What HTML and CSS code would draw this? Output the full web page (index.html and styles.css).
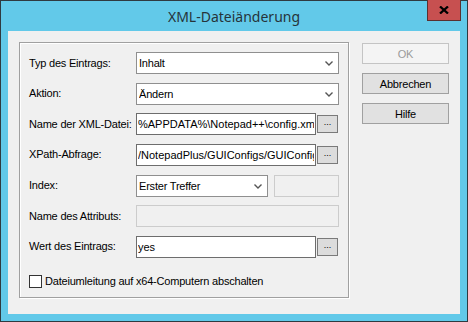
FILE: index.html
```html
<!DOCTYPE html>
<html lang="de">
<head>
    <meta charset="UTF-8">
    <title>XML-Dateiänderung</title>
    <link rel="stylesheet" href="styles.css">
</head>
<body>
    <div class="window">
        <div class="titlebar">
            <span class="title">XML-Dateiänderung</span>
            <button class="close" title="Schließen">
                <svg width="10" height="8" viewBox="0 0 10 8"><path d="M1 0.5 L9 7.5 M9 0.5 L1 7.5" stroke="#000" stroke-width="2.3"/></svg>
            </button>
        </div>

        <div class="client">
            <div class="group">
                <div class="grid">
                    <label>Typ des Eintrags:</label>
                    <div class="combo">
                        <select><option>Inhalt</option></select>
                        <svg class="chev" width="8" height="5" viewBox="0 0 8 5"><path d="M0.5 0.5 L4 4 L7.5 0.5" fill="none" stroke="#555" stroke-width="1.4"/></svg>
                    </div>

                    <label>Aktion:</label>
                    <div class="combo">
                        <select><option>Ändern</option></select>
                        <svg class="chev" width="8" height="5" viewBox="0 0 8 5"><path d="M0.5 0.5 L4 4 L7.5 0.5" fill="none" stroke="#555" stroke-width="1.4"/></svg>
                    </div>

                    <label>Name der XML-Datei:</label>
                    <div class="field">
                        <input type="text" value="%APPDATA%\Notepad++\config.xml">
                        <button class="dots">...</button>
                    </div>

                    <label>XPath-Abfrage:</label>
                    <div class="field">
                        <input type="text" value="/NotepadPlus/GUIConfigs/GUIConfig[@name='RememberLastSession']">
                        <button class="dots">...</button>
                    </div>

                    <label>Index:</label>
                    <div class="field">
                        <div class="combo small">
                            <select><option>Erster Treffer</option></select>
                            <svg class="chev" width="8" height="5" viewBox="0 0 8 5"><path d="M0.5 0.5 L4 4 L7.5 0.5" fill="none" stroke="#555" stroke-width="1.4"/></svg>
                        </div>
                        <input type="text" class="disabled" disabled>
                    </div>

                    <label>Name des Attributs:</label>
                    <div class="field">
                        <input type="text" class="disabled" disabled>
                    </div>

                    <label>Wert des Eintrags:</label>
                    <div class="field">
                        <input type="text" value="yes">
                        <button class="dots">...</button>
                    </div>
                </div>

                <label class="check"><span class="box"></span>Dateiumleitung auf x64-Computern abschalten</label>
            </div>

            <div class="buttons">
                <button class="btn" disabled>OK</button>
                <button class="btn">Abbrechen</button>
                <button class="btn">Hilfe</button>
            </div>
        </div>
    </div>
</body>
</html>
```

FILE: styles.css
```css
body { margin: 0; font-family: "Liberation Sans", Arial, sans-serif; font-size: 11px; letter-spacing: -0.2px; color: #000; }
.window { position: relative; width: 468px; height: 322px; box-sizing: border-box; border: 1px solid #2f3a40; background: #62c9e9; }
.titlebar { height: 30px; display: flex; align-items: center; justify-content: center; }
.title { font-family: "Noto Sans", sans-serif; font-size: 14px; letter-spacing: 0; color: #26343a; }
.close { position: absolute; top: -1px; right: 6px; width: 34px; height: 21px; box-sizing: border-box; border: 1px solid #5a3030; border-top: none; background: #c75050; padding: 0; display: flex; align-items: center; justify-content: center; }
.close svg { display: block; }

.client { margin: 0 7px; height: 283px; background: #f0f0f0; box-sizing: border-box; padding: 11px; display: flex; gap: 13px; }

.group { width: 330px; height: 256px; box-sizing: border-box; border: 1px solid #a0a0a0; box-shadow: inset 1px 1px 0 #fff, 1px 1px 0 #fff; padding: 9px 9px 0 9px; }
.grid { display: grid; grid-template-columns: 107px 203px; grid-auto-rows: 22px; row-gap: 8.67px; align-items: center; }
.grid label { line-height: 13px; white-space: nowrap; }

.combo { position: relative; height: 22px; }
.combo select { appearance: none; -webkit-appearance: none; width: 100%; height: 100%; box-sizing: border-box; border: 1px solid #8f8f8f; background: #fff; font: inherit; letter-spacing: inherit; color: #000; padding: 0 0 0 2px; margin: 0; border-radius: 0; }
.chev { position: absolute; right: 6px; top: 9px; }
.combo.small { width: 132px; flex: none; }

.field { display: flex; align-items: center; height: 22px; }
.field input { flex: 1; min-width: 0; height: 22px; box-sizing: border-box; border: 1px solid #6d6d6d; background: #fff; font: inherit; letter-spacing: 0; color: #000; padding: 0 1px; margin: 0; border-radius: 0; outline: none; }
.field input.disabled { border-color: #cccccc; background: #f0f0f0; }
.combo.small + input { margin-left: 6px; }
.dots { width: 21px; height: 18px; margin: 0 1px 0 1px; padding: 0 0 4px; box-sizing: border-box; border: 1px solid #7a7a7a; background: #dcdcdc; font: inherit; font-size: 9px; line-height: 8px; color: #000; flex: none; }

.check { display: flex; align-items: center; margin-top: 17px; height: 13px; }
.box { width: 13px; height: 13px; box-sizing: border-box; border: 1px solid #333; background: #fff; margin-right: 3px; }

.buttons { display: flex; flex-direction: column; gap: 9px; padding-top: 1px; }
.btn { width: 87px; height: 21px; box-sizing: border-box; border: 1px solid #a0a0a0; background: #e1e1e1; font: inherit; letter-spacing: inherit; color: #000; padding: 0; margin: 0; }
.btn:disabled { border-color: #c4c4c4; background: #f4f4f4; color: #9a9a9a; }
```
